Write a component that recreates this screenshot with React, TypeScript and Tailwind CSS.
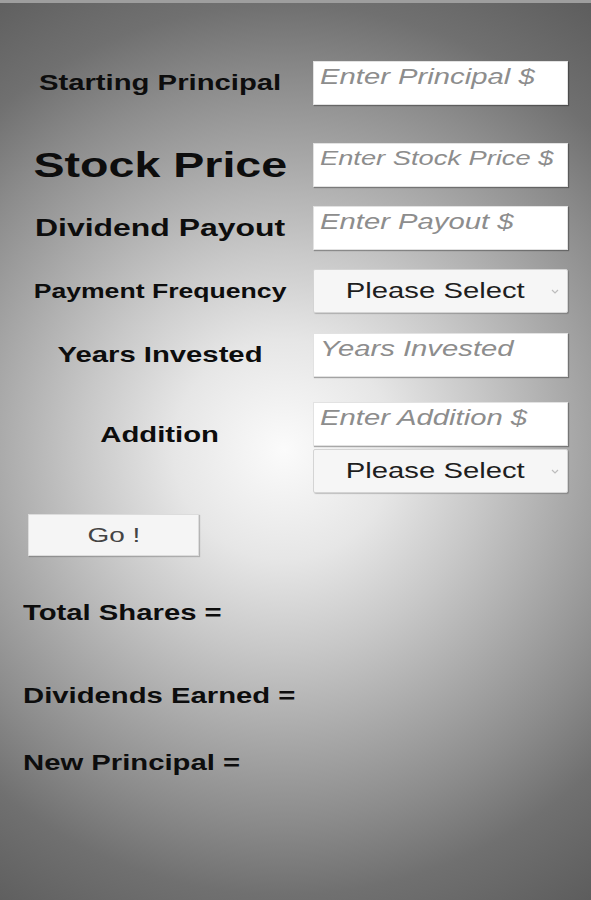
import React from "react";

const FONT = "font-['Liberation_Sans',Arial,sans-serif]";

function Label({ text, size }: { text: string; size: string }) {
  return (
    <div className="w-[306px] flex justify-center">
      <span
        className={`inline-block origin-center scale-x-[1.33] font-bold text-[#0d0d0d] leading-[1.15] whitespace-nowrap ${size}`}
      >
        {text}
      </span>
    </div>
  );
}

function TextBox({ placeholder, size = "text-[22px]" }: { placeholder: string; size?: string }) {
  return (
    <div className="w-[255px] h-[44px] bg-white border border-[#e2e2e2] shadow-[1px_1px_1px_rgba(0,0,0,0.3)] pl-[6px] pt-[2px]">
      <span
        className={`inline-block origin-left scale-x-[1.33] italic leading-[1.15] text-[#8d8d8d] whitespace-nowrap ${size}`}
      >
        {placeholder}
      </span>
    </div>
  );
}

function SelectBox() {
  return (
    <div className="w-[255px] h-[44px] bg-[#f6f6f6] border border-[#d4d4d4] rounded-[2px] shadow-[1px_1px_1px_rgba(0,0,0,0.2)] flex items-center pl-[5px]">
      <div className="flex-1 flex justify-center">
        <span className="inline-block origin-center scale-x-[1.33] text-[22px] leading-[1.15] text-[#1e1e1e] whitespace-nowrap">
          Please Select
        </span>
      </div>
      <svg width="8" height="5" viewBox="0 0 8 5" className="mr-[8px]">
        <path d="M1 1 L4 4 L7 1" fill="none" stroke="#bdbdbd" strokeWidth="1.2" />
      </svg>
    </div>
  );
}

function Result({ text }: { text: string }) {
  return (
    <div className="pl-[23px]">
      <span className="inline-block origin-left scale-x-[1.33] font-bold text-[22px] leading-[1.15] text-[#0d0d0d] whitespace-nowrap">
        {text}
      </span>
    </div>
  );
}

export default function App() {
  return (
    <div
      className={`${FONT} w-[591px] h-[900px] overflow-hidden bg-[radial-gradient(circle_at_48%_50%,#fbfbfb_0px,#e6e6e6_110px,#c8c8c8_200px,#a8a8a8_290px,#8c8c8c_370px,#707070_445px,#585858_570px)]`}
    >
      <div className="h-[3px] bg-[#9e9e9e]" />
      <div className="pt-[58px] flex flex-col">
        <div className="flex items-center pl-[7px]">
          <Label text="Starting Principal" size="text-[22px]" />
          <TextBox placeholder="Enter Principal $" />
        </div>
        <div className="flex items-center pl-[7px] mt-[38px]">
          <Label text="Stock Price" size="text-[35px]" />
          <TextBox placeholder="Enter Stock Price $" size="text-[20.5px]" />
        </div>
        <div className="flex items-center pl-[7px] mt-[19px]">
          <Label text="Dividend Payout" size="text-[24px]" />
          <TextBox placeholder="Enter Payout $" />
        </div>
        <div className="flex items-center pl-[7px] mt-[19px]">
          <Label text="Payment Frequency" size="text-[20px]" />
          <SelectBox />
        </div>
        <div className="flex items-center pl-[7px] mt-[20px]">
          <Label text="Years Invested" size="text-[22px]" />
          <TextBox placeholder="Years Invested" />
        </div>
        <div className="flex items-start pl-[7px] mt-[25px]">
          <div className="pt-[20px]">
            <Label text="Addition" size="text-[22px]" />
          </div>
          <div className="flex flex-col gap-[3px]">
            <TextBox placeholder="Enter Addition $" />
            <SelectBox />
          </div>
        </div>
        <div className="pl-[28px] mt-[21px]">
          <button className="w-[171px] h-[42px] bg-[#f5f5f5] border border-[#dcdcdc] shadow-[1px_1px_1px_rgba(0,0,0,0.2)] flex items-center justify-center">
            <span className="inline-block origin-center scale-x-[1.33] text-[21px] leading-[1.15] text-[#444]">
              Go !
            </span>
          </button>
        </div>
        <div className="mt-[44px]">
          <Result text="Total Shares =" />
        </div>
        <div className="mt-[56px]">
          <Result text="Dividends Earned =" />
        </div>
        <div className="mt-[40px]">
          <Result text="New Principal =" />
        </div>
      </div>
    </div>
  );
}
